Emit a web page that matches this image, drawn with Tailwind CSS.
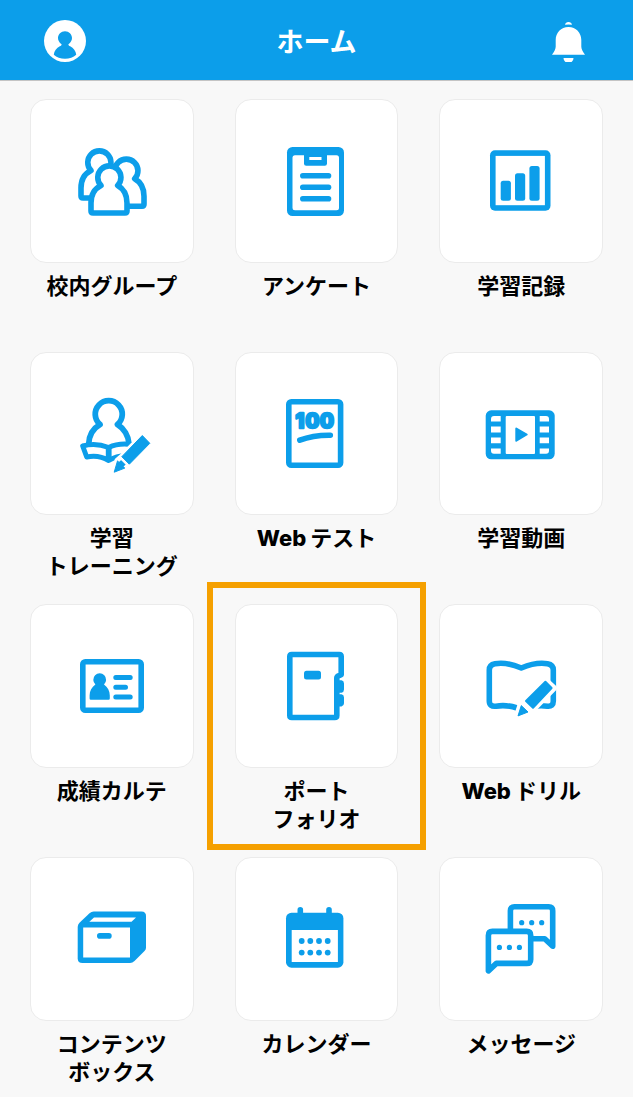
<!DOCTYPE html>
<html lang="ja">
<head>
    <meta charset="UTF-8"/>
    <meta name="viewport" content="width=device-width, initial-scale=1.0"/>
    <title>ホーム</title>
    <script src="https://cdn.jsdelivr.net/npm/@tailwindcss/browser@4"></script>
</head>
<body class="bg-[#f8f8f8] min-h-screen text-black font-['Inter','Noto_Sans_CJK_JP',sans-serif]">
<!-- ヘッダー -->
<header class="bg-[#0c9eea] border-b border-[#c4c4c4] h-[81px] px-11 pt-0.5 flex items-center justify-between text-white">
    <button type="button" aria-label="プロフィール">
        <svg class="size-[42px]" viewBox="0 0 42 42" aria-hidden="true">
            <circle cx="21" cy="21" r="21" fill="#fff"/>
            <path fill="#0c9eea" d="M17.6 24.2C15.2 22.6 14 20.3 14 18C14 14.2 17 11.2 21 11.2S28 14.2 28 18C28 20.3 26.8 22.6 24.4 24.2C24.4 25.3 25 25.8 26.2 26.3C29.5 28 31.8 31 32.2 34.8C29.4 37.3 25.5 38.7 21 38.7S12.6 37.3 9.8 34.8C10.2 31 12.5 28 15.8 26.3C17 25.8 17.6 25.3 17.6 24.2Z"/>
        </svg>
    </button>
    <h1 class="pt-1 text-[27px] leading-9 font-bold">ホーム</h1>
    <button type="button" aria-label="お知らせ">
        <svg class="size-[42px]" viewBox="0 0 42 42" fill="#fff" aria-hidden="true">
            <path d="M18 4.800A3.600 3.600 0 0 1 25 4.800Q21.500 4 18 4.800Z"/>
            <path d="M21.500 7C14 7 8.700 12.800 8.700 20V26.500Q8.700 30 5 34.800H38Q34.300 30 34.300 26.500V20C34.300 12.800 29 7 21.500 7Z"/>
            <path d="M16.500 38H26.500A5 5 0 0 1 16.500 38Z"/>
        </svg>
    </button>
</header>

<!-- メニュー -->
<main class="px-[30px] pt-[18px] pb-2">
    <ul class="grid grid-cols-3 gap-x-[41px] gap-y-6 text-[22px] leading-7 font-bold text-center">
        <li>
            <a href="#" class="block">
                <span class="flex aspect-square items-center justify-center rounded-2xl border border-[#ebebeb] bg-white">
                    <svg class="size-20" viewBox="0 0 80 80" fill="#fff" stroke="#0c9eea" stroke-width="5.6" stroke-linejoin="round" aria-hidden="true">
                        <defs>
                            <path id="person" d="M29 44.5A11.6 11.6 0 1 1 45.7 44.5C52 48 55 54 55 62V70Q55 72 53 72H21Q19 72 19 70V62C19 54 22 48 29 44.5Z"/>
                        </defs>
                        <use href="#person" x="17" y="-6.7"/>
                        <use href="#person" x="-10" y="-15"/>
                        <use href="#person"/>
                    </svg>
                </span>
                <span class="mt-[9px] block min-h-14">校内グループ</span>
            </a>
        </li>
        <li>
            <a href="#" class="block">
                <span class="flex aspect-square items-center justify-center rounded-2xl border border-[#ebebeb] bg-white">
                    <svg class="size-20" viewBox="0 0 80 80" fill="#0c9eea" aria-hidden="true">
                        <rect x="11" y="6" width="57" height="69" rx="5.5"/>
                        <rect x="16.5" y="14.3" width="46.5" height="55" rx="2.5" fill="#fff"/>
                        <path d="M28 13H51V22.5Q51 24.7 48.8 24.7H30.2Q28 24.7 28 22.5Z"/>
                        <rect x="33.3" y="16" width="12.2" height="3" fill="#fff"/>
                        <rect x="24" y="32" width="31.3" height="5.6" rx="2.8"/>
                        <rect x="24" y="43.5" width="31.3" height="5.6" rx="2.8"/>
                        <rect x="24" y="55" width="31.3" height="5.6" rx="2.8"/>
                    </svg>
                </span>
                <span class="mt-[9px] block min-h-14">アンケート</span>
            </a>
        </li>
        <li>
            <a href="#" class="block">
                <span class="flex aspect-square items-center justify-center rounded-2xl border border-[#ebebeb] bg-white">
                    <svg class="size-20" viewBox="0 0 80 80" fill="#0c9eea" aria-hidden="true">
                        <rect x="9" y="9.3" width="60.5" height="60.5" rx="5"/>
                        <rect x="14.6" y="14.9" width="49.3" height="49.3" fill="#fff"/>
                        <rect x="19.7" y="39.7" width="10.2" height="20" rx="2.5"/>
                        <rect x="34" y="32.3" width="10.2" height="27.4" rx="2.5"/>
                        <rect x="48.4" y="25" width="10.2" height="34.7" rx="2.5"/>
                    </svg>
                </span>
                <span class="mt-[9px] block min-h-14">学習記録</span>
            </a>
        </li>
        <li>
            <a href="#" class="block">
                <span class="flex aspect-square items-center justify-center rounded-2xl border border-[#ebebeb] bg-white">
                    <svg class="size-20" viewBox="0 0 80 80" fill="none" stroke="#0c9eea" stroke-width="5.8" stroke-linejoin="round" aria-hidden="true">
                        <path d="M16.7 50C17 42 21 34.5 28 30.5A13.5 13.5 0 1 1 45.5 30.5C52 34.5 56.5 42 57 50"/>
                        <path stroke-width="5" fill="#fff" d="M10.7 52C19 49.5 28 50 36.7 53.5C44 50 51 49.5 59 50.5V62C50 61 43 62.5 36.7 66.5C30 62.5 22 61.5 14.7 63Z"/>
                        <path d="M36.7 53.5V66"/>
                        <path fill="#0c9eea" stroke="#fff" stroke-width="5" d="M70.3 41L78.3 49.3L57.3 70.7L49.3 62.7ZM49.3 62.7L57.3 70.7L53.3 74.4L41.7 78.7L45 66.4Z"/>
                        <path fill="#0c9eea" stroke-width="1" d="M70.3 41.5L77.8 49.3L57.3 70.2L49.8 62.7ZM45.5 66.9L52.8 74.1L42.2 78.2Z"/>
                    </svg>
                </span>
                <span class="mt-[9px] block min-h-14">学習<br/>トレーニング</span>
            </a>
        </li>
        <li>
            <a href="#" class="block">
                <span class="flex aspect-square items-center justify-center rounded-2xl border border-[#ebebeb] bg-white">
                    <svg class="size-20" viewBox="0 0 80 80" fill="none" stroke="#0c9eea" stroke-width="5.6" stroke-linecap="round" aria-hidden="true">
                        <rect x="12.8" y="7.8" width="51.8" height="63.5" rx="2.5"/>
                        <text class="font-['Inter'] text-[20px] font-extrabold" x="24 36.5 51" y="34" text-anchor="middle" fill="#0c9eea" stroke-width="2.5" stroke-linejoin="round">100</text>
                        <path d="M23.8 46.2Q37 41 54.3 41.2"/>
                    </svg>
                </span>
                <span class="mt-[9px] block min-h-14"><span class="mr-1 font-extrabold">Web</span>テスト</span>
            </a>
        </li>
        <li>
            <a href="#" class="block">
                <span class="flex aspect-square items-center justify-center rounded-2xl border border-[#ebebeb] bg-white">
                    <svg class="size-20" viewBox="0 0 80 80" fill="#fff" aria-hidden="true">
                        <rect x="4.7" y="16.3" width="69" height="49" rx="5.5" fill="#0c9eea"/>
                        <rect x="24.7" y="22" width="29.3" height="38" rx="1"/>
                        <path d="M19.7 22V27.4H10V25Q10 22 13 22ZM10 32.5H19.7V38.4H10ZM10 43.5H19.7V49.2H10ZM10 54.5H19.7V59.8H13Q10 59.8 10 56.8Z"/>
                        <path d="M58.7 22V27.4H68V25Q68 22 65 22ZM58.7 32.5H68V38.4H58.7ZM58.7 43.5H68V49.2H58.7ZM58.7 54.5V59.8H65Q68 59.8 68 56.8V54.5Z"/>
                        <path fill="#0c9eea" stroke="#0c9eea" stroke-width="2" stroke-linejoin="round" d="M35.3 34.5L45.7 40.5L35.3 46.7Z"/>
                    </svg>
                </span>
                <span class="mt-[9px] block min-h-14">学習動画</span>
            </a>
        </li>
        <li>
            <a href="#" class="block">
                <span class="flex aspect-square items-center justify-center rounded-2xl border border-[#ebebeb] bg-white">
                    <svg class="size-20" viewBox="0 0 80 80" fill="none" stroke="#0c9eea" stroke-width="5" stroke-linecap="round" aria-hidden="true">
                        <rect x="10.8" y="15.8" width="58.4" height="48.4" rx="2.5" stroke-width="5.6"/>
                        <path fill="#0c9eea" stroke="none" d="M23.4 38.5A6.4 6.4 0 1 1 32 38.5C35.7 41 37.8 45 37.8 49.5V52.5Q37.8 53.7 36.6 53.7H18.8Q17.6 53.7 17.6 52.5V49.5C17.6 45 19.7 41 23.4 38.5Z"/>
                        <path d="M43.8 31.4H58.2M43.8 41.2H53.5M43.8 51H58.2"/>
                    </svg>
                </span>
                <span class="mt-[9px] block min-h-14">成績カルテ</span>
            </a>
        </li>
        <li class="relative">
            <!-- 強調枠 -->
            <span class="pointer-events-none absolute -inset-x-7 -top-[22px] -bottom-[17px] border-6 border-[#f5a000]"></span>
            <a href="#" class="block">
                <span class="flex aspect-square items-center justify-center rounded-2xl border border-[#ebebeb] bg-white">
                    <svg class="size-20" viewBox="0 0 80 80" fill="none" stroke="#0c9eea" stroke-width="5.6" stroke-linejoin="round" stroke-linecap="round" aria-hidden="true">
                        <path d="M65.2 28.7V10.5Q65.2 8.5 63.2 8.5H15.8Q13.8 8.5 13.8 10.5V69.5Q13.8 71.5 15.8 71.5H58.8Q60.8 71.5 60.8 69.5V32Q60.8 30.500 62.5 29.8Z"/>
                        <path fill="#fff" stroke="none" d="M63.6 32.5H69V34H65Z"/>
                        <path fill="#0c9eea" stroke="none" d="M61 34.3H65.5Q68 34.8 68 37.5V43.5Q68 46 65.5 46.7H61ZM61 48.2H65.5Q68 48.7 68 51.4V57.3Q68 60 65.5 60.5H61Z"/>
                        <rect x="28" y="24.7" width="17" height="8.8" rx="2.5" fill="#0c9eea" stroke="none"/>
                    </svg>
                </span>
                <span class="mt-[9px] block min-h-14">ポート<br/>フォリオ</span>
            </a>
        </li>
        <li>
            <a href="#" class="block">
                <span class="flex aspect-square items-center justify-center rounded-2xl border border-[#ebebeb] bg-white">
                    <svg class="size-20" viewBox="0 0 80 80" fill="none" stroke="#0c9eea" stroke-width="5.6" stroke-linejoin="round" aria-hidden="true">
                        <path d="M36 62C28 59.3 22 59 15 60.2Q8.3 61 8.3 55V24Q8.3 18.8 14 17.8C23 16.3 31 18 40.3 22C50 18 58 16.3 66.5 17.8Q72.3 18.8 72.3 24V55Q72.3 60.8 66.5 60.2Q61 59.3 55 60"/>
                        <path fill="#fff" stroke="#fff" stroke-width="7" d="M64.4 34.7L72.3 42L52 62.7L47.7 66.4L36.4 70.4L40 59L44 55Z"/>
                        <path fill="#0c9eea" stroke-width="2" d="M64.4 35.7L70.6 42L52 61.7L45 55Z"/>
                        <path fill="#0c9eea" stroke-width="1" d="M40.3 59.6L47 66L37 69.9Z"/>
                    </svg>
                </span>
                <span class="mt-[9px] block min-h-14"><span class="mr-1 font-extrabold">Web</span>ドリル</span>
            </a>
        </li>
        <li>
            <a href="#" class="block">
                <span class="flex aspect-square items-center justify-center rounded-2xl border border-[#ebebeb] bg-white">
                    <svg class="size-20" viewBox="0 0 80 80" fill="#fff" aria-hidden="true">
                        <path fill="#0c9eea" d="M5.7 28Q5.7 25.5 7.5 23.7L17.5 14.2Q19.3 12.5 21.8 12.5H69.5Q74 12.5 74 17V48.5Q74 50.5 72.5 52L62.5 62Q60.5 64 58 64H10.5Q5.7 64 5.7 59.5Z"/>
                        <path d="M11.2 28.4H58V58.4H11.2ZM22 18.4H64L59.5 22.7H17.3Z"/>
                        <rect x="25" y="34" width="14.7" height="5.7" rx="2.8" fill="#0c9eea"/>
                    </svg>
                </span>
                <span class="mt-[9px] block min-h-14">コンテンツ<br/>ボックス</span>
            </a>
        </li>
        <li>
            <a href="#" class="block">
                <span class="flex aspect-square items-center justify-center rounded-2xl border border-[#ebebeb] bg-white">
                    <svg class="size-20" viewBox="0 0 80 80" fill="#0c9eea" aria-hidden="true">
                        <rect x="10" y="13.7" width="57.4" height="55" rx="5.5"/>
                        <rect x="21.5" y="8" width="5.6" height="12" rx="2.8"/>
                        <rect x="50.2" y="8" width="5.6" height="12" rx="2.8"/>
                        <path fill="#fff" d="M15.7 31H61.9V62.9H15.7Z"/>
                        <circle cx="25.7" cy="42" r="2.9"/>
                        <circle cx="34.3" cy="42" r="2.9"/>
                        <circle cx="43" cy="42" r="2.9"/>
                        <circle cx="51.7" cy="42" r="2.9"/>
                        <circle cx="25.7" cy="53.6" r="2.9"/>
                        <circle cx="34.3" cy="53.6" r="2.9"/>
                        <circle cx="43" cy="53.6" r="2.9"/>
                        <circle cx="51.7" cy="53.6" r="2.9"/>
                    </svg>
                </span>
                <span class="mt-[9px] block min-h-14">カレンダー</span>
            </a>
        </li>
        <li>
            <a href="#" class="block">
                <span class="flex aspect-square items-center justify-center rounded-2xl border border-[#ebebeb] bg-white">
                    <svg class="size-20" viewBox="0 0 80 80" fill="#fff" stroke="#0c9eea" stroke-width="5.6" stroke-linejoin="round" aria-hidden="true">
                        <path d="M33.4 7.7H67.7Q71.7 7.7 71.7 11.7V47.2L63.7 39.7H33.4Q29.4 39.7 29.4 35.7V11.7Q29.4 7.7 33.4 7.7Z"/>
                        <path d="M11.4 32.4H45.7Q49.7 32.4 49.7 36.4V60.4Q49.7 64.4 45.7 64.4H15.4L7.4 71.9V36.4Q7.4 32.4 11.4 32.4Z"/>
                        <g fill="#0c9eea" stroke="none">
                            <circle cx="40.7" cy="23.7" r="2.6"/>
                            <circle cx="50.7" cy="23.7" r="2.6"/>
                            <circle cx="60.7" cy="23.7" r="2.6"/>
                            <circle cx="18.4" cy="48.4" r="2.6"/>
                            <circle cx="28.4" cy="48.4" r="2.6"/>
                            <circle cx="38.4" cy="48.4" r="2.6"/>
                        </g>
                    </svg>
                </span>
                <span class="mt-[9px] block min-h-14">メッセージ</span>
            </a>
        </li>
    </ul>
</main>
</body>
</html>
